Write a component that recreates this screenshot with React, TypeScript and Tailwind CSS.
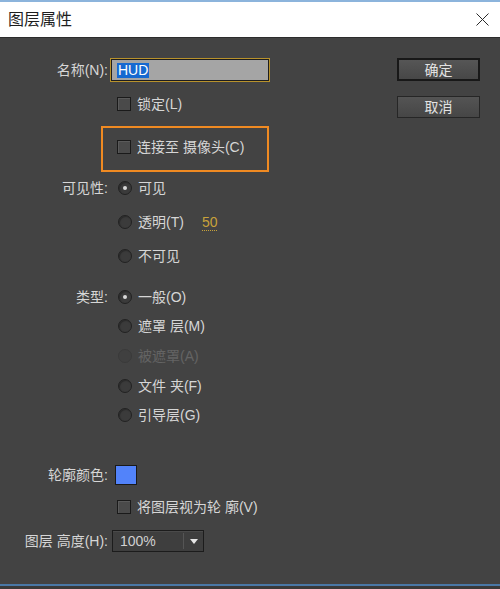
import React from "react";

const font = { fontFamily: '"Liberation Sans", "Noto Sans CJK SC", sans-serif' };

const Checkbox = () => (
  <div className="w-[14px] h-[14px] shrink-0 border border-[#1a1a1a] bg-[#4a4a4a] shadow-[inset_1px_1px_0_#5a5a5a]" />
);

const Radio = ({ checked = false, disabled = false }: { checked?: boolean; disabled?: boolean }) => (
  <div
    className={
      disabled
        ? "w-[14px] h-[14px] shrink-0 rounded-full border border-[#3a3a3a] bg-[#404040] flex items-center justify-center"
        : "w-[14px] h-[14px] shrink-0 rounded-full border border-[#222] bg-[#3b3b3b] shadow-[inset_1px_1px_1px_#2a2a2a] flex items-center justify-center"
    }
  >
    {checked && <div className="w-[4px] h-[4px] rounded-full bg-[#d8d8d8]" />}
  </div>
);

const Label = ({ children }: { children?: React.ReactNode }) => (
  <div className="w-[108px] shrink-0 text-right text-[14px] text-[#d6d6d6] leading-none">{children}</div>
);

const RadioRow = ({
  label,
  text,
  checked,
  disabled,
  className,
}: {
  label?: string;
  text: React.ReactNode;
  checked?: boolean;
  disabled?: boolean;
  className: string;
}) => (
  <div className={`flex items-center h-[20px] ${className}`}>
    <Label>{label}</Label>
    <div className="ml-[10px] flex items-center gap-[6px]">
      <Radio checked={checked} disabled={disabled} />
      <span className={`text-[14px] leading-none ${disabled ? "text-[#646464]" : "text-[#d6d6d6]"}`}>{text}</span>
    </div>
  </div>
);

export default function App() {
  return (
    <div className="w-[500px] h-[589px] flex flex-col bg-[#434343] overflow-hidden" style={font}>
      <div className="h-[2px] bg-[#8cb4dc]" />
      {/* Title bar */}
      <div className="h-[36px] bg-white flex items-center justify-between px-[8px] border-b border-[#2c2c2c]">
        <span className="text-[16px] text-[#1e1e1e]">图层属性</span>
        <svg width="13" height="13" viewBox="0 0 13 13" className="mr-[3px]">
          <path d="M0.5 0.5 L12.5 12.5 M12.5 0.5 L0.5 12.5" stroke="#2a2a2a" strokeWidth="1" />
        </svg>
      </div>

      {/* Body */}
      <div className="flex-1 flex">
        <div className="flex-1 flex flex-col">
          {/* Name */}
          <div className="flex items-center mt-[20px] h-[24px]">
            <Label>名称(N):</Label>
            <div className="ml-[2px] w-[160px] h-[24px] border border-[#b8922c]">
              <div className="w-full h-full border border-[#1e1e1e] bg-[#a5a5a5] flex items-center pl-[5px]">
                <span className="bg-[#1769d0] text-white text-[14px] leading-[15px] px-[1px]">HUD</span>
              </div>
            </div>
          </div>

          {/* Lock */}
          <div className="flex items-center mt-[12px] h-[20px]">
            <Label />
            <div className="ml-[9px] flex items-center gap-[6px]">
              <Checkbox />
              <span className="text-[14px] leading-none text-[#d6d6d6]">锁定(L)</span>
            </div>
          </div>

          {/* Connect to camera (highlighted) */}
          <div className="ml-[101px] mt-[12px] w-[168px] h-[46px] border-2 border-[#f08a22] flex items-center pl-[14px] pb-[4px]">
            <div className="flex items-center gap-[6px]">
              <Checkbox />
              <span className="text-[14px] leading-none text-[#d6d6d6]">连接至 摄像头(C)</span>
            </div>
          </div>

          <RadioRow className="mt-[6px]" label="可见性:" text="可见" checked />
          <RadioRow
            className="mt-[14px]"
            text={
              <span className="flex items-center">
                透明(T)
                <span className="ml-[18px] text-[#c8a23a] border-b border-dotted border-[#c8a23a] leading-[15px] pt-[2px]">50</span>
              </span>
            }
          />
          <RadioRow className="mt-[14px]" text="不可见" />

          <RadioRow className="mt-[21px]" label="类型:" text="一般(O)" checked />
          <RadioRow className="mt-[9px]" text="遮罩 层(M)" />
          <RadioRow className="mt-[10px]" text="被遮罩(A)" disabled />
          <RadioRow className="mt-[10px]" text="文件 夹(F)" />
          <RadioRow className="mt-[9px]" text="引导层(G)" />

          {/* Outline color */}
          <div className="flex items-center mt-[40px] h-[20px]">
            <Label>轮廓颜色:</Label>
            <div className="ml-[7px] w-[22px] h-[20px] border border-[#1a1a1a] bg-[#5283fa]" />
          </div>

          <div className="flex items-center mt-[12px] h-[20px]">
            <Label />
            <div className="ml-[9px] flex items-center gap-[6px]">
              <Checkbox />
              <span className="text-[14px] leading-none text-[#d6d6d6]">将图层视为轮 廓(V)</span>
            </div>
          </div>

          {/* Layer height */}
          <div className="flex items-center mt-[13px] h-[22px]">
            <Label>图层 高度(H):</Label>
            <div className="ml-[4px] w-[92px] h-[22px] border border-[#1c1c1c] bg-[#3e3e3e] flex items-center shadow-[inset_0_1px_0_#4a4a4a]">
              <span className="pl-[7px] w-[70px] text-[14px] leading-none text-[#d0d0d0]">100%</span>
              <div className="w-[1px] h-[16px] bg-[#252525] border-r border-[#555]" />
              <div className="flex-1 flex items-center justify-center">
                <svg width="8" height="5" viewBox="0 0 8 5">
                  <path d="M0 0 H8 L4 5 Z" fill="#e6e6e6" />
                </svg>
              </div>
            </div>
          </div>
        </div>

        {/* Buttons */}
        <div className="w-[83px] mr-[20px] pt-[20px] flex flex-col">
          <button className="h-[23px] border-2 border-[#181818] bg-gradient-to-b from-[#565656] to-[#474747] text-[14px] leading-none text-[#e2e2e2]">
            确定
          </button>
          <button className="mt-[15px] h-[22px] border border-[#262626] bg-gradient-to-b from-[#545454] to-[#464646] text-[14px] leading-none text-[#e2e2e2]">
            取消
          </button>
        </div>
      </div>

      <div className="h-[2px] bg-[#4a78a6]" />
      <div className="h-[3px] bg-[#3a3a3a]" />
    </div>
  );
}
